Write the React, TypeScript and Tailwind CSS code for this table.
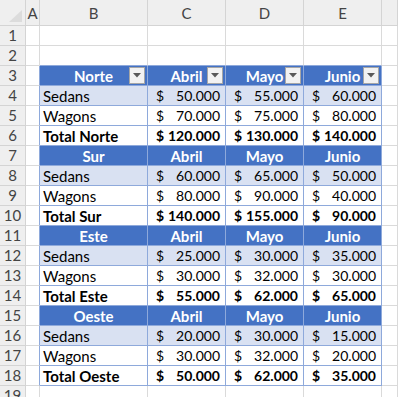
import React from 'react';

type Row = { label: string; values: number[]; kind: 'band' | 'plain' | 'total' };
type Region = { name: string; rows: Row[]; filter?: boolean };

const regions: Region[] = [
  {
    name: 'Norte',
    filter: true,
    rows: [
      { label: 'Sedans', values: [50000, 55000, 60000], kind: 'band' },
      { label: 'Wagons', values: [70000, 75000, 80000], kind: 'plain' },
      { label: 'Total Norte', values: [120000, 130000, 140000], kind: 'total' },
    ],
  },
  {
    name: 'Sur',
    rows: [
      { label: 'Sedans', values: [60000, 65000, 50000], kind: 'band' },
      { label: 'Wagons', values: [80000, 90000, 40000], kind: 'plain' },
      { label: 'Total Sur', values: [140000, 155000, 90000], kind: 'total' },
    ],
  },
  {
    name: 'Este',
    rows: [
      { label: 'Sedans', values: [25000, 30000, 35000], kind: 'band' },
      { label: 'Wagons', values: [30000, 32000, 30000], kind: 'plain' },
      { label: 'Total Este', values: [55000, 62000, 65000], kind: 'total' },
    ],
  },
  {
    name: 'Oeste',
    rows: [
      { label: 'Sedans', values: [20000, 30000, 15000], kind: 'band' },
      { label: 'Wagons', values: [30000, 32000, 20000], kind: 'plain' },
      { label: 'Total Oeste', values: [50000, 62000, 35000], kind: 'total' },
    ],
  },
];

const months = ['Abril', 'Mayo', 'Junio'];

const fmt = (n: number) => n.toLocaleString('de-DE');

function FilterButton() {
  return (
    <div className="absolute right-[2px] top-[1px] flex h-[17px] w-[16px] items-center justify-center border border-[#a6a6a6] bg-[#f2f2f2]">
      <svg width="8" height="5" viewBox="0 0 8 5">
        <path d="M0 0 H8 L4 4.5 Z" fill="#595959" />
      </svg>
    </div>
  );
}

function RowNum({ n }: { n: number }) {
  return (
    <div className="flex items-center justify-center border-r border-b border-[#d4d4d4] bg-[#efefef] text-[15px] text-[#444]">
      {n}
    </div>
  );
}

function Blank({ tableLeft, tableTop }: { tableLeft?: boolean; tableTop?: boolean }) {
  return (
    <div
      className={`border-r border-b ${
        tableLeft ? 'border-r-[#8ea9db]' : 'border-r-[#dadada]'
      } ${tableTop ? 'border-b-[#8ea9db]' : 'border-b-[#dadada]'}`}
    />
  );
}

export default function App() {
  let rowNo = 3;
  return (
    <div
      className="h-[397px] w-[398px] overflow-hidden bg-white text-[14px] leading-none text-black"
      style={{ fontFamily: 'Lato, "Liberation Sans", sans-serif' }}
    >
      <div className="grid grid-cols-[26px_14px_108px_78px_78px_78px_1fr] grid-rows-[26px_repeat(19,20px)]">
        {/* column headers */}
        <div className="relative border-r border-b border-[#d4d4d4] bg-[#efefef]">
          <svg className="absolute right-[3px] bottom-[3px]" width="13" height="12" viewBox="0 0 13 12">
            <path d="M13 0 V12 H0 Z" fill="#dcdcdc" />
          </svg>
        </div>
        {['A', 'B', 'C', 'D', 'E', ''].map((c, i) => (
          <div
            key={i}
            className="flex items-center justify-center border-r border-b border-[#d4d4d4] bg-[#efefef] pt-[2px] text-[15px] text-[#444]"
          >
            {c}
          </div>
        ))}

        {/* rows 1-2 */}
        {[1, 2].map((n) => (
          <React.Fragment key={n}>
            <RowNum n={n} />
            <Blank />
            {[0, 1, 2, 3].map((i) => (
              <Blank key={i} tableTop={n === 2} />
            ))}
            <Blank />
          </React.Fragment>
        ))}

        {regions.map((r) => {
          const hdr = rowNo++;
          return (
            <React.Fragment key={r.name}>
              <RowNum n={hdr} />
              <Blank tableLeft />
              <div className="relative flex items-center justify-center border-r border-b border-[#8ea9db] bg-[#4472c4] pt-[1px] text-[15px] font-bold text-white">
                {r.name}
                {r.filter && <FilterButton />}
              </div>
              {months.map((m) => (
                <div
                  key={m}
                  className="relative flex items-center justify-center border-r border-b border-[#8ea9db] bg-[#4472c4] pt-[1px] text-[15px] font-bold text-white"
                >
                  {m}
                  {r.filter && <FilterButton />}
                </div>
              ))}
              <Blank />
              {r.rows.map((row) => {
                const n = rowNo++;
                const bg = row.kind === 'band' ? 'bg-[#d9e1f2]' : 'bg-white';
                const bold = row.kind === 'total' ? 'font-bold' : '';
                return (
                  <React.Fragment key={n}>
                    <RowNum n={n} />
                    <Blank tableLeft />
                    <div className={`flex items-center border-r border-b border-[#8ea9db] pt-[1px] pl-[3px] text-[15px] ${bg} ${bold}`}>
                      {row.label}
                    </div>
                    {row.values.map((v, i) => (
                      <div
                        key={i}
                        className={`flex items-center justify-between border-r border-b border-[#8ea9db] pt-[1px] pr-[5px] pl-[8px] ${bg} ${bold}`}
                      >
                        <span>$</span>
                        <span>{fmt(v)}</span>
                      </div>
                    ))}
                    <Blank />
                  </React.Fragment>
                );
              })}
            </React.Fragment>
          );
        })}

        {/* row 19 */}
        <RowNum n={19} />
        <Blank />
        {[0, 1, 2, 3].map((i) => (
          <Blank key={i} />
        ))}
        <Blank />
      </div>
    </div>
  );
}
